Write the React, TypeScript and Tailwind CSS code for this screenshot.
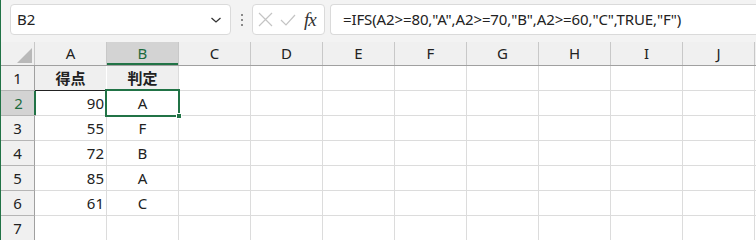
import React from "react";

const cols = ["A", "B", "C", "D", "E", "F", "G", "H", "I", "J"];
const rows: { n: number; a: string; b: string; head?: boolean }[] = [
  { n: 1, a: "得点", b: "判定", head: true },
  { n: 2, a: "90", b: "A" },
  { n: 3, a: "55", b: "F" },
  { n: 4, a: "72", b: "B" },
  { n: 5, a: "85", b: "A" },
  { n: 6, a: "61", b: "C" },
  { n: 7, a: "", b: "" },
];

const font = {
  fontFamily: '"Noto Sans", "Noto Sans CJK JP", sans-serif',
};

export default function App() {
  return (
    <div
      className="relative w-[756px] h-[240px] overflow-hidden bg-[#f3f3f3] border-l border-[#217346] text-[#222]"
      style={font}
    >
      {/* toolbar */}
      <div className="flex h-[42px] items-start pt-[4px] pl-[9px]">
        <div className="flex h-[31px] w-[221px] items-center justify-between rounded-[4px] border border-[#dadada] bg-white pl-[6px] pr-[8px]">
          <span className="text-[15px] leading-none text-[#222]">B2</span>
          <svg width="12" height="8" viewBox="0 0 12 8">
            <path d="M1.5 2 L6 6 L10.5 2" fill="none" stroke="#333" strokeWidth="1.3" />
          </svg>
        </div>
        <div className="flex h-[31px] w-[21px] flex-col items-center justify-center gap-[3px]">
          <div className="h-[2px] w-[2px] bg-[#8a8a8a]" />
          <div className="h-[2px] w-[2px] bg-[#8a8a8a]" />
          <div className="h-[2px] w-[2px] bg-[#8a8a8a]" />
        </div>
        <div className="flex h-[31px] w-[73px] items-center rounded-[4px] border border-[#dadada] bg-white pl-[5px]">
          <svg width="15" height="15" viewBox="0 0 15 15">
            <path d="M1 1 L14 14 M14 1 L1 14" stroke="#c4c4c4" strokeWidth="1.2" />
          </svg>
          <svg width="16" height="12" viewBox="0 0 16 12" className="ml-[7px]">
            <path d="M1 6 L6 11 L15 1" fill="none" stroke="#c4c4c4" strokeWidth="1.2" />
          </svg>
          <span
            className="ml-[8px] text-[19px] italic leading-none text-[#333] tracking-[-1px]"
            style={{ fontFamily: '"Liberation Serif", serif' }}
          >
            fx
          </span>
        </div>
        <div className="ml-[5px] flex h-[31px] flex-1 items-center rounded-l-[4px] border border-r-0 border-[#dadada] bg-white pl-[12px]">
          <span className="text-[15px] leading-none text-[#222] whitespace-nowrap tracking-[-0.12px]">
            =IFS(A2&gt;=80,"A",A2&gt;=70,"B",A2&gt;=60,"C",TRUE,"F")
          </span>
        </div>
      </div>

      {/* grid */}
      <div className="relative">
        {/* header row */}
        <div className="flex h-[24px] border-b border-[#a0a0a0]">
          <div className="relative w-[34px] shrink-0 border-r border-[#c8c8c8] bg-[#f0f0f0]">
            <svg className="absolute left-[15px] top-[6px]" width="17" height="15" viewBox="0 0 17 15">
              <polygon points="16,0 16,15 1,15" fill="#b9b9b9" />
            </svg>
          </div>
          {cols.map((c) => (
            <div
              key={c}
              className={
                c === "B"
                  ? "flex w-[72px] shrink-0 items-center justify-center border-r border-[#c8c8c8] bg-[#d3d3d3] text-[15px] text-[#1d6b3e] shadow-[inset_0_-2px_0_#217346]"
                  : "flex w-[72px] shrink-0 items-center justify-center border-r border-[#c8c8c8] bg-[#f0f0f0] text-[15px] text-[#222]"
              }
            >
              {c}
            </div>
          ))}
          <div className="flex-1 bg-[#f0f0f0]" />
        </div>

        {rows.map((r) => (
          <div key={r.n} className="flex h-[25px]">
            <div
              className={
                r.n === 2
                  ? "flex w-[35px] shrink-0 items-center justify-center border-b border-[#b5b5b5] bg-[#d3d3d3] text-[15px] text-[#1d6b3e] shadow-[inset_-2px_0_0_#217346]"
                  : "flex w-[34px] shrink-0 items-center justify-center border-b border-r border-[#b5b5b5] border-r-[#a0a0a0] bg-[#f0f0f0] text-[15px] text-[#222]"
              }
            >
              {r.n}
            </div>
            {r.head ? (
              <>
                <div className="flex w-[72px] shrink-0 items-center justify-center border-r border-b border-r-[#ffffff] border-b-[#222] bg-[#efefef] text-[15px] font-bold">
                  {r.a}
                </div>
                <div className="flex w-[72px] shrink-0 items-center justify-center border-r border-b border-[#dcdcdc] bg-[#efefef] text-[15px] font-bold">
                  {r.b}
                </div>
              </>
            ) : (
              <>
                <div
                  className={
                    r.n === 2
                      ? "flex w-[71px] shrink-0 items-center justify-end border-r border-b border-[#dcdcdc] bg-white pr-[2px] text-[15px]"
                      : "flex w-[72px] shrink-0 items-center justify-end border-r border-b border-[#dcdcdc] bg-white pr-[2px] text-[15px]"
                  }
                >
                  {r.a}
                </div>
                <div className="flex w-[72px] shrink-0 items-center justify-center border-r border-b border-[#dcdcdc] bg-white text-[15px]">
                  {r.b}
                </div>
              </>
            )}
            {cols.slice(2).map((c) => (
              <div key={c} className="w-[72px] shrink-0 border-r border-b border-[#dcdcdc] bg-white" />
            ))}
            <div className="flex-1 border-b border-[#dcdcdc] bg-white" />
          </div>
        ))}

        {/* selection */}
        <div className="pointer-events-none absolute left-[104px] top-[47px] h-[28px] w-[75px] border-2 border-[#217346]" />
        <div className="pointer-events-none absolute left-[175px] top-[71px] h-[6px] w-[6px] border border-white bg-[#217346]" />
      </div>
    </div>
  );
}
